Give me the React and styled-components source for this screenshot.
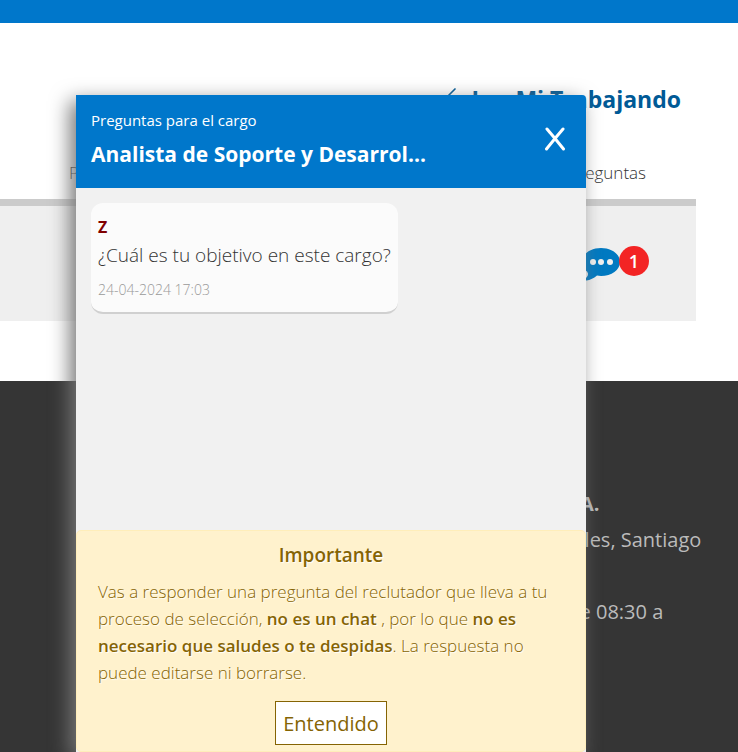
import styled, { createGlobalStyle } from 'styled-components'
import { ChevronLeft } from 'lucide-react'

const GlobalStyle = createGlobalStyle`
  * {
    box-sizing: border-box;
  }

  body {
    margin: 0;
    background: #ffffff;
    font-family: 'Open Sans', 'Noto Sans', sans-serif;
    overflow: hidden;
  }
`

const TopBar = styled.div`
  height: 23px;
  background: #0077cb;
`

const Main = styled.main`
  margin-right: 42px;
  padding: 56px 0 60px;
`

const HomeLink = styled.a`
  display: flex;
  justify-content: flex-end;
  align-items: center;
  gap: 1px;
  padding-right: 15px;
  color: #005a96;
  font-size: 23px;
  font-weight: 700;
  line-height: 40px;
  text-decoration: none;
`

const Columns = styled.div`
  display: flex;
  justify-content: space-between;
  margin-top: 32px;
  padding: 8px 50px 12px 69px;
  font-size: 17px;
  font-weight: 300;
  line-height: 28px;
  color: #333333;
`

const Application = styled.div`
  display: flex;
  justify-content: flex-end;
  height: 122px;
  padding: 40px 47px 0 0;
  border-top: 7px solid #cbcbcb;
  background: #efefef;
`

const Messages = styled.a`
  display: flex;
  align-items: flex-start;
  height: 40px;
  text-decoration: none;
`

const Badge = styled.span`
  width: 30px;
  margin-left: -2px;
  border-radius: 50%;
  background: #f32424;
  color: #ffffff;
  font-size: 18px;
  font-weight: 600;
  line-height: 30px;
  text-align: center;
`

const Footer = styled.footer`
  min-height: 371px;
  padding: 105px 0 0 341px;
  background: #353535;
  color: #bbbbbb;
  font-size: 20px;
  line-height: 36px;
  white-space: nowrap;

  p {
    margin: 0;
  }

  p + p + p {
    margin-top: 36px;
  }
`

const Dialog = styled.section`
  position: fixed;
  top: 95px;
  bottom: 0;
  left: 76px;
  display: flex;
  flex-direction: column;
  width: calc(100% - 228px);
  border-top-right-radius: 4px;
  background: #f1f1f1;
  box-shadow: -6px 6px 20px #777777;
`

const DialogHeader = styled.header`
  display: flex;
  justify-content: space-between;
  align-items: center;
  height: 93px;
  padding: 0 20px 8px 15px;
  border-top-right-radius: 4px;
  background: #0077cb;
  color: #ffffff;
`

const Subtitle = styled.p`
  margin: 0;
  font-size: 15px;
  line-height: 32px;
`

const Title = styled.h2`
  margin: 0;
  font-size: 21px;
  font-weight: 700;
  line-height: 36px;
`

const CloseButton = styled.button`
  display: flex;
  padding: 2px 0 0;
  border: 0;
  background: none;
  color: inherit;
  cursor: pointer;
`

const Conversation = styled.div`
  flex: 1;
  padding: 15px;
`

const Bubble = styled.article`
  width: fit-content;
  padding: 10px 7px 6px;
  border-bottom: 2px solid #d0d0d0;
  border-radius: 12px;
  background: #fbfbfb;
`

const Author = styled.p`
  margin: 0;
  color: #800000;
  font-size: 16px;
  font-weight: 700;
  line-height: 28px;
`

const Question = styled.p`
  margin: 0 0 5px;
  color: #333333;
  font-size: 19px;
  font-weight: 300;
  line-height: 28px;
`

const SentAt = styled.time`
  display: block;
  color: #999999;
  font-size: 14px;
  font-weight: 300;
  line-height: 32px;
`

const Notice = styled.div`
  padding: 8px 21px 6px;
  border: 1px solid #ffeeba;
  border-radius: 5px;
  background: #fff2cd;
  color: #856404;
  text-align: center;
  text-shadow: 1px 1px 1px #ffffff;
`

const NoticeTitle = styled.h3`
  margin: 0;
  font-size: 19px;
  font-weight: 600;
  line-height: 32px;
`

const NoticeText = styled.p`
  margin: 7px 0 15px;
  font-size: 17px;
  font-weight: 300;
  line-height: 27px;
  text-align: left;

  b {
    font-weight: 600;
  }
`

const AcceptButton = styled.button`
  height: 44px;
  padding: 0 7px;
  border: 1px solid #856404;
  background: #ffffff;
  color: #856404;
  font-family: inherit;
  font-size: 20px;
  cursor: pointer;
`

function ChatIcon() {
  return (
    <svg width="39" height="36" viewBox="0 0 39 36" aria-hidden="true">
      <path
        d="M19 2C8.500 2 0 8 0 16c0 4 2 7.500 5.500 10C5 29.500 3 32.500 .500 34.500c6.500.500 11-2 14.500-5 1.300.300 2.600.500 4 .500 10.500 0 19-6 19-14S29.500 2 19 2Z"
        fill="#0079c1"
      />
      <circle cx="11" cy="16" r="3" fill="#efefef" />
      <circle cx="19" cy="16" r="3" fill="#efefef" />
      <circle cx="28" cy="16" r="3" fill="#efefef" />
      <path d="M0 25.500c3 0 6 .500 6 2.500 0 2-1.500 4-4 5.500Z" fill="#efefef" />
    </svg>
  )
}

function CloseIcon() {
  return (
    <svg width="22" height="24" viewBox="0 0 22 24" aria-hidden="true">
      <path
        d="M3 2 11 11.500 19 2M2.500 22 11 11.500 19.500 22"
        fill="none"
        stroke="#ffffff"
        strokeWidth="3"
        strokeLinecap="round"
        strokeLinejoin="round"
      />
    </svg>
  )
}

export default function App() {
  return (
    <>
      <GlobalStyle />
      <TopBar />
      <Main>
        <HomeLink href="#inicio">
          <ChevronLeft size={40} strokeWidth={1} />
          Ir a Mi Trabajando
        </HomeLink>
        <Columns>
          <span>Postulación</span>
          <span>Preguntas</span>
        </Columns>
        <Application>
          <Messages href="#preguntas">
            <ChatIcon />
            <Badge>1</Badge>
          </Messages>
        </Application>
      </Main>
      <Footer>
        <p>
          <strong>Trabajando.com Chile S.A.</strong>
        </p>
        <p>Huérfanos 1055, Los Ángeles, Santiago</p>
        <p>Horario: lunes a viernes de 08:30 a</p>
      </Footer>
      <Dialog role="dialog" aria-labelledby="dialog-title">
        <DialogHeader>
          <div>
            <Subtitle>Preguntas para el cargo</Subtitle>
            <Title id="dialog-title">Analista de Soporte y Desarrol...</Title>
          </div>
          <CloseButton type="button" aria-label="Cerrar">
            <CloseIcon />
          </CloseButton>
        </DialogHeader>
        <Conversation>
          <Bubble>
            <Author>Z</Author>
            <Question>¿Cuál es tu objetivo en este cargo?</Question>
            <SentAt dateTime="2024-04-24T17:03">24-04-2024 17:03</SentAt>
          </Bubble>
        </Conversation>
        <Notice>
          <NoticeTitle>Importante</NoticeTitle>
          <NoticeText>
            Vas a responder una pregunta del reclutador que lleva a tu proceso de selección, <b>no es un chat</b> , por lo
            que <b>no es necesario que saludes o te despidas</b>. La respuesta no puede editarse ni borrarse.
          </NoticeText>
          <AcceptButton type="button">Entendido</AcceptButton>
        </Notice>
      </Dialog>
    </>
  )
}
